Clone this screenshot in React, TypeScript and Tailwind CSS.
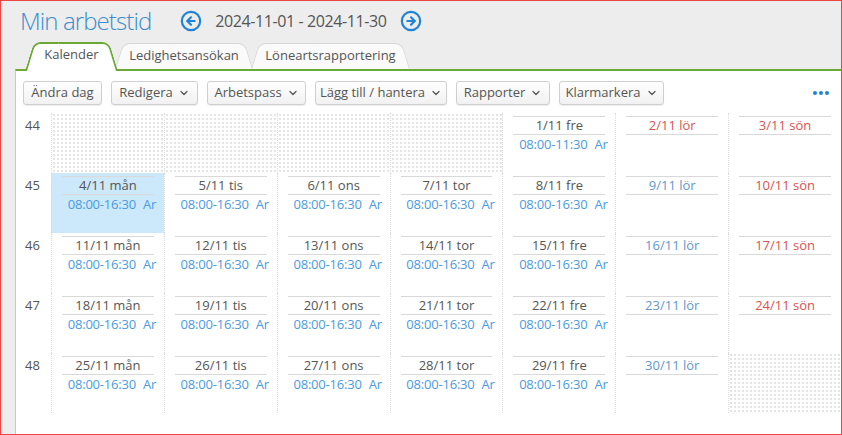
import { ChevronDown, CircleArrowLeft, CircleArrowRight } from "lucide-react";

type Day = {
  label?: string;
  time?: string;
  kind?: "week" | "sat" | "red";
  blank?: boolean;
  active?: boolean;
};

const weeks: { nr: number; days: Day[] }[] = [
  {
    nr: 44,
    days: [
      { blank: true },
      { blank: true },
      { blank: true },
      { blank: true },
      { label: "1/11 fre", time: "08:00-11:30" },
      { label: "2/11 lör", kind: "red" },
      { label: "3/11 sön", kind: "red" },
    ],
  },
  {
    nr: 45,
    days: [
      { label: "4/11 mån", time: "08:00-16:30", active: true },
      { label: "5/11 tis", time: "08:00-16:30" },
      { label: "6/11 ons", time: "08:00-16:30" },
      { label: "7/11 tor", time: "08:00-16:30" },
      { label: "8/11 fre", time: "08:00-16:30" },
      { label: "9/11 lör", kind: "sat" },
      { label: "10/11 sön", kind: "red" },
    ],
  },
  {
    nr: 46,
    days: [
      { label: "11/11 mån", time: "08:00-16:30" },
      { label: "12/11 tis", time: "08:00-16:30" },
      { label: "13/11 ons", time: "08:00-16:30" },
      { label: "14/11 tor", time: "08:00-16:30" },
      { label: "15/11 fre", time: "08:00-16:30" },
      { label: "16/11 lör", kind: "sat" },
      { label: "17/11 sön", kind: "red" },
    ],
  },
  {
    nr: 47,
    days: [
      { label: "18/11 mån", time: "08:00-16:30" },
      { label: "19/11 tis", time: "08:00-16:30" },
      { label: "20/11 ons", time: "08:00-16:30" },
      { label: "21/11 tor", time: "08:00-16:30" },
      { label: "22/11 fre", time: "08:00-16:30" },
      { label: "23/11 lör", kind: "sat" },
      { label: "24/11 sön", kind: "red" },
    ],
  },
  {
    nr: 48,
    days: [
      { label: "25/11 mån", time: "08:00-16:30" },
      { label: "26/11 tis", time: "08:00-16:30" },
      { label: "27/11 ons", time: "08:00-16:30" },
      { label: "28/11 tor", time: "08:00-16:30" },
      { label: "29/11 fre", time: "08:00-16:30" },
      { label: "30/11 lör", kind: "sat" },
      { blank: true },
    ],
  },
];

const buttons = [
  { text: "Ändra dag", w: "w-[79px]", menu: false },
  { text: "Redigera", w: "w-[87px]", menu: true },
  { text: "Arbetspass", w: "w-[99px]", menu: true },
  { text: "Lägg till / hantera", w: "w-[132px]", menu: true },
  { text: "Rapporter", w: "w-[94px]", menu: true },
  { text: "Klarmarkera", w: "w-[105px]", menu: true },
];

function Tab({ text, active, w }: { text: string; active?: boolean; w: string }) {
  const edge = active
    ? "border-[#6aa935] border-t-2 bg-white"
    : "border-[#d6d6d6] border-t bg-[#fafafa]";
  return (
    <div
      className={`relative flex items-center justify-center ${w} ${
        active ? "z-10 -mb-[2px] h-[29px] pb-[3px]" : "h-[26px]"
      }`}
    >
      <div
        className={`absolute inset-y-0 left-0 w-[55%] origin-bottom rounded-tl-[7px] [transform:skewX(-17deg)] ${edge} ${
          active ? "border-l-2" : "border-l"
        }`}
      />
      <div
        className={`absolute inset-y-0 right-0 w-[55%] origin-bottom rounded-tr-[7px] [transform:skewX(17deg)] ${edge} ${
          active ? "border-r-2" : "border-r"
        }`}
      />
      <span className="relative text-[13px] text-[#555]">{text}</span>
    </div>
  );
}

function Cell({ day }: { day: Day }) {
  const sep = "border-l border-dotted border-[#dadada]";

  if (day.blank) {
    return (
      <div className={`h-[60px] bg-[radial-gradient(circle,#d6d6d6_0.6px,transparent_0.9px)] bg-[length:4px_4px] ${sep}`} />
    );
  }

  const color =
    day.kind === "red" ? "text-[#d9534f]" : day.kind === "sat" ? "text-[#5f98cc]" : "text-[#555]";

  return (
    <div className={`h-[60px] pt-[3px] ${day.active ? "bg-[#cce8fb]" : ""} ${sep}`}>
      <div className="mx-[10px] h-px bg-[#d9d9d9]" />
      <div className={`h-[17px] text-center text-[13px] leading-[17px] ${color}`}>{day.label}</div>
      <div className="mx-[10px] h-px bg-[#d9d9d9]" />
      {day.time && (
        <div className="flex justify-center pl-[8px] text-[13px] leading-[18px] tracking-[-0.2px] text-[#4a9be0]">
          <span>{day.time}</span>
          <span className="ml-[7px]">Ar</span>
        </div>
      )}
    </div>
  );
}

export default function App() {
  return (
    <div className="flex h-[435px] w-[842px] flex-col overflow-hidden border border-[#ef4444] bg-[#ededed] font-['Open_Sans',sans-serif]">
      {/* header */}
      <div className="flex h-[40px] shrink-0 items-center pl-[19px]">
        <h1 className="text-[24px] font-light leading-none tracking-[-0.9px] text-[#3a8dd0]">Min arbetstid</h1>
        <CircleArrowLeft className="ml-[29px] text-[#1f84d6]" size={22} strokeWidth={2.4} />
        <span className="ml-[13px] text-[16px] tracking-[-0.4px] text-[#555]">2024-11-01 - 2024-11-30</span>
        <CircleArrowRight className="ml-[13px] text-[#1f84d6]" size={22} strokeWidth={2.4} />
      </div>

      {/* tabs */}
      <div className="flex h-[28px] shrink-0 items-end pl-[24px]">
        <Tab text="Kalender" active w="w-[93px]" />
        <Tab text="Ledighetsansökan" w="-ml-[3px] w-[138px]" />
        <Tab text="Löneartsrapportering" w="-ml-[2px] w-[159px]" />
      </div>

      <div className="flex flex-1">
        <div className="w-[14px] shrink-0" />
        <div className="flex flex-1 flex-col border-l border-t-2 border-l-[#c9c9c9] border-t-[#6aa935] bg-white">
          {/* toolbar */}
          <div className="mt-[10px] flex items-center gap-[9px] pl-[7px] pr-[12px]">
            {buttons.map((b) => (
              <button
                key={b.text}
                className={`flex h-[24px] items-center justify-center gap-[5px] rounded-[3px] border border-[#cfcfcf] bg-gradient-to-b from-white to-[#f1f1f1] text-[13px] text-[#555] shadow-[0_1px_1px_rgba(0,0,0,0.08)] ${b.w}`}
              >
                {b.text}
                {b.menu && <ChevronDown size={12} strokeWidth={2.5} />}
              </button>
            ))}
            <div className="ml-auto flex gap-[2px]">
              <span className="h-[4px] w-[4px] rounded-full bg-[#1f84d6]" />
              <span className="h-[4px] w-[4px] rounded-full bg-[#1f84d6]" />
              <span className="h-[4px] w-[4px] rounded-full bg-[#1f84d6]" />
            </div>
          </div>

          {/* calendar */}
          <div className="mt-[8px] flex flex-col">
            {weeks.map((wk) => (
              <div key={wk.nr} className="flex">
                <div className="w-[35px] shrink-0 pl-[9px] pt-[4px] text-[13px] leading-[17px] text-[#555]">{wk.nr}</div>
                <div className="grid flex-1 grid-cols-7">
                  {wk.days.map((d, i) => (
                    <Cell key={i} day={d} />
                  ))}
                </div>
              </div>
            ))}
          </div>
        </div>
      </div>
    </div>
  );
}
